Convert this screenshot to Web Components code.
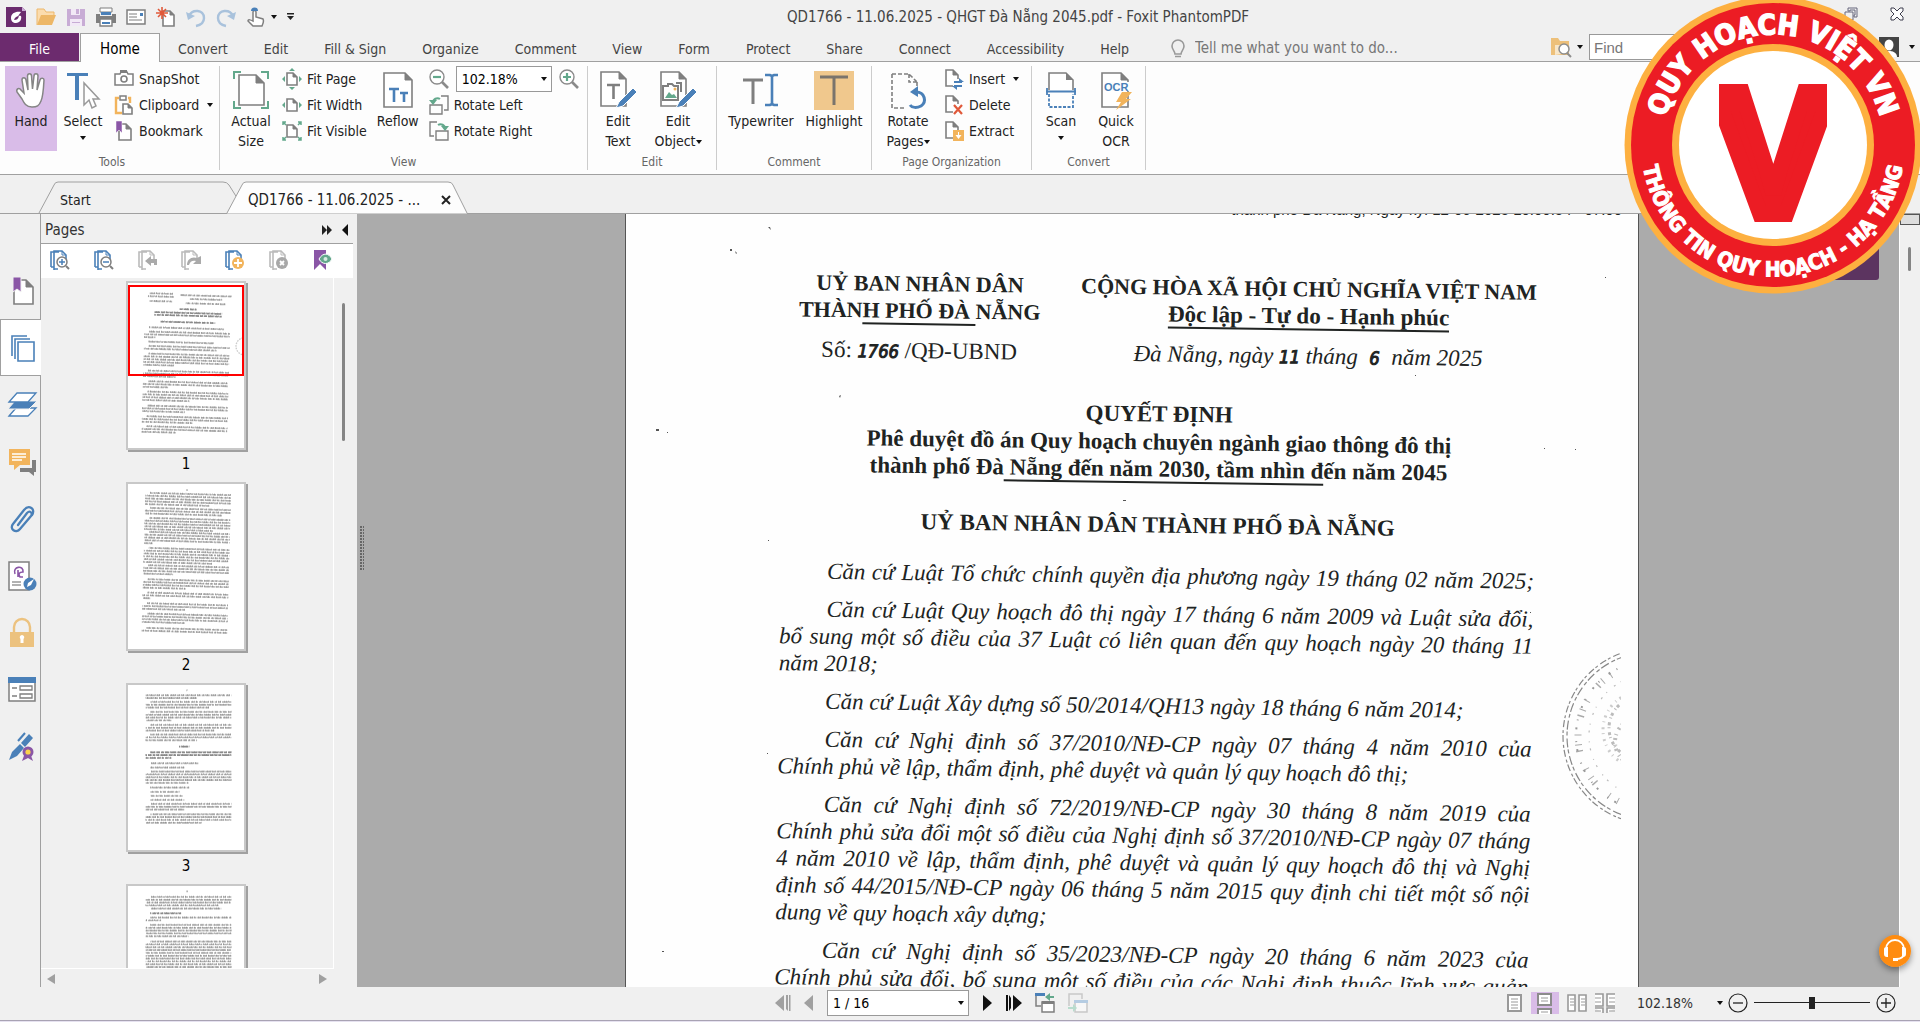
<!DOCTYPE html>
<html lang="vi">
<head>
<meta charset="utf-8">
<title>QD1766 - 11.06.2025 - QHGT Đà Nẵng 2045.pdf - Foxit PhantomPDF</title>
<style>
html,body{height:100%}
body{margin:0;background:#f0f0f0;color:#222;font-family:"DejaVu Sans Condensed","Noto Sans",sans-serif;font-size:14px;line-height:20px;overflow:hidden}
</style>
</head>
<body>
<pdf-app></pdf-app>
<script>
const G='#7f7f7f', B='#4a80b8', T='#63a88c', O='#f2b45c', P='#8a56a6';
const corner=(x,y,w,h,f)=>`<path d="M${x} ${y}h${w-f}l${f} ${f}v${h-f}h${-w}z" fill="#fff" stroke="${G}" stroke-width="1.6"/><path d="M${x+w-f} ${y}v${f}h${f}z" fill="${G}" stroke="${G}"/>`;
const caret='<path d="M0 0h6L3 4z" fill="#111"/>';
const ICONS={
 caret:[6,4,caret],
 cross:[10,10,'<path d="M1 1l8 8M9 1l-8 8" stroke="#222" stroke-width="2"/>'],
 app:[20,20,`<path d="M0 0h16l4 4v16H0z" fill="#6b2c6e"/><path d="M16 0v4h4z" fill="#c9a9d6"/><path d="M15 5c-5-1-10 1-10 6 0 3 2 5 5 5 4 0 6-4 5-7-3-1-6 1-6 4" fill="#fff"/><path d="M8 13c1-3 3-4 5-4-1 3-2 4-5 4z" fill="#6b2c6e"/>`],
 open:[20,20,`<path d="M1 18V2h7l2 3h8v4" fill="#fbdcae" stroke="#edb86c"/><path d="M1 18L5 8h15l-4 10z" fill="#edb767"/>`],
 save:[20,20,`<path d="M1 2h18v17H1z" fill="#c8acd5"/><path d="M5 2h9v6H5zM4 12h12v7H4z" fill="#f2e9f6"/><path d="M10 2h3v5h-3zM6 15h8v1H6z" fill="#c8acd5"/>`],
 print:[20,20,`<path d="M4 1h12v4H4z" fill="#fff" stroke="${G}"/><path d="M5 5h10v3H5z" fill="${B}"/><path d="M0 7h4v2h12V7h4v9H0z" fill="${G}"/><path d="M4 12h12v7H4z" fill="#fff" stroke="${G}" stroke-width="1.4"/><path d="M6 15h8v2H6z" fill="${B}"/>`],
 mail:[20,20,`<path d="M1 3h18v14H1z" fill="#fff" stroke="${G}" stroke-width="1.5"/><path d="M3 7h8M3 10h8M3 13h13" stroke="${G}"/><path d="M14 6h3v3h-3z" fill="${B}"/>`],
 create:[20,20,`${corner(7,4,11,15,4)}<path d="M6 0v12M0 6h12M2 2l8 8M10 2l-8 8" stroke="#e0593a" stroke-width="1.6"/>`],
 undo:[20,20,`<path d="M3 9c3-7 15-7 15 2 0 4-3 7-8 8" fill="none" stroke="#a9c2dc" stroke-width="2.4"/><path d="M0 5l2 8 7-4z" fill="#a9c2dc"/>`],
 redo:[20,20,`<path d="M17 9c-3-7-15-7-15 2 0 4 3 7 8 8" fill="none" stroke="#a9c2dc" stroke-width="2.4"/><path d="M20 5l-2 8-7-4z" fill="#a9c2dc"/>`],
 touch:[20,20,`<path d="M7 12V5a1.500 1.500 0 0 1 3 0v5l7 2c1 2 0 5-1 7H7L2 14c0-2 3-1 5 0z" fill="#fff" stroke="${G}" stroke-width="1.5"/><path d="M5 4a3.500 3.500 0 1 1 7 0" fill="${B}"/>`],
 custom:[8,8,`<path d="M0 0h7v1.500H0zM0 3h7L3.500 7z" fill="#222"/>`],
 bulb:[14,20,`<path d="M4 16c0-3-3-4-3-8a6 6 0 0 1 12 0c0 4-3 5-3 8zM4 18.500h6" fill="none" stroke="#999" stroke-width="1.6"/>`],
 hand:[32,38,`<path d="M9 22L7 9c0-3 3.500-3 4 0l2 10-.5-14c0-3 4-3 4 0l1 13L19 5c0-3 4-3 4 0l-1 14 3-10c.7-2.500 4-2 4 0-.5 9-1 17-3 21-2 5-4 6-9 6-6 0-8-4-10-8l-5-7c-1-3 2-5 4-2z" fill="#fff" stroke="#858585" stroke-width="1.5"/>`],
 select:[34,38,`<path d="M1 2h21v3H13v24h-4V5H1z" fill="${B}"/><path d="M18 12v22l5-5 3 8 4-2-3-7h6z" fill="#fff" stroke="#999" stroke-width="1.5"/>`],
 snapshot:[20,20,`<path d="M1 5h5l1-2h6l1 2h5v11H1z" fill="#fff" stroke="${G}" stroke-width="1.5"/><path d="M6 1h7v3H6z" fill="${G}"/><circle cx="10" cy="10" r="3" fill="none" stroke="${G}" stroke-width="1.6"/>`],
 clipboard:[20,20,`<path d="M5 3H2v15h6M14 3h2v5" fill="none" stroke="${O}" stroke-width="2.400"/><path d="M6 1h6v4H6z" fill="#fff" stroke="${G}" stroke-width="1.500"/>${corner(9,9,9,10,4)}`],
 bookmark:[20,20,`${corner(5,3,12,16,5)}<path d="M2 0h6v12l-3-3-3 3z" fill="${P}" stroke="#fff" stroke-width=".5"/>`],
 actual:[36,38,`<path d="M1 8V1h7M28 1h7v7M1 30v7h7M28 37h7v-7" fill="none" stroke="${T}" stroke-width="2"/>${corner(6,4,25,30,8)}`],
 fitpage:[20,20,`${corner(5,4,10,12,4)}<path d="M7 2l3-3 3 3zM7 18l3 3 3-3zM3 7l-3 3 3 3zM17 7l3 3-3 3z" fill="${T}"/>`],
 fitwidth:[20,20,`${corner(5,4,10,12,4)}<path d="M3 7l-3 3 3 3zM17 7l3 3-3 3z" fill="${T}"/>`],
 fitvisible:[20,20,`${corner(5,4,10,12,4)}<path d="M1 4V1h3M16 1h3v3M1 16v3h3M16 19h3v-3M1 1l3 3M19 1l-3 3M1 19l3-3M19 19l-3-3" fill="none" stroke="${T}" stroke-width="1.5"/>`],
 reflow:[30,38,`${corner(1,2,28,34,7)}<path d="M6 18h10M11 18v13M17 22h8M21 22v9" stroke="${B}" stroke-width="2.600"/>`],
 zoomout:[20,20,`<circle cx="8" cy="8" r="7" fill="#fff" stroke="#8a8a8a" stroke-width="1.400"/><path d="M13 13l6 6" stroke="#8a8a8a" stroke-width="2.6"/><path d="M4 8h8" stroke="${T}" stroke-width="2.200"/>`],
 zoomin:[20,20,`<circle cx="8" cy="8" r="7" fill="#fff" stroke="#8a8a8a" stroke-width="1.400"/><path d="M13 13l6 6" stroke="#8a8a8a" stroke-width="2.6"/><path d="M4 8h8M8 4v8" stroke="${T}" stroke-width="2.200"/>`],
 rotleft:[20,20,`<path d="M1 10h12v9H1zM12 1h7v14h-4" fill="none" stroke="${G}" stroke-width="1.400"/><path d="M4 8c0-4 4-6 7-4" fill="none" stroke="${T}" stroke-width="2"/><path d="M0 5l4 5 4-5z" fill="${T}"/>`],
 rotright:[20,20,`<path d="M7 10h12v9H7zM8 1H1v14h4" fill="none" stroke="${G}" stroke-width="1.400"/><path d="M16 8c0-4-4-6-7-4" fill="none" stroke="${T}" stroke-width="2"/><path d="M20 5l-4 5-4-5z" fill="${T}"/>`],
 edittext:[38,40,`${corner(2,2,25,34,7)}<path d="M8 15h13M14.500 15v14" stroke="${G}" stroke-width="2.600"/><path d="M17 38l3-6 14-14 4 4-14 14z" fill="${B}" stroke="#fff"/>`],
 editobj:[38,40,`${corner(2,2,25,34,7)}<path d="M9 16h-5v14h15V16h-4l-2-2h-4zM17 13h5v9" fill="#fff" stroke="${G}" stroke-width="2"/><path d="M6 28l4-6 3 3 2-1 3 4z" fill="${T}"/><circle cx="16" cy="19" r="1.500" fill="${O}"/><path d="M17 38l3-6 14-14 4 4-14 14z" fill="${B}" stroke="#fff"/>`],
 typewriter:[36,38,`<path d="M0 9h20M10 9v24" stroke="${G}" stroke-width="3"/><path d="M22 4h5l2 1 2-1h4M22 34h5l2-1 2 1h4M29 5v28" fill="none" stroke="${B}" stroke-width="2.600"/>`],
 highlight:[40,40,`<path d="M0 1h40v39H0z" fill="#f0c88d"/><path d="M6 7h28M20 7v28" stroke="#7a746c" stroke-width="3"/>`],
 rotate:[36,40,`<path d="M2 4h17l8 8M2 4v34h14M27 12v8M19 4v8h8" fill="none" stroke="${G}" stroke-width="1.600" stroke-dasharray="4 2"/><path d="M26 22c9 0 11 10 5 14-4 2-9 2-11-1" fill="none" stroke="${B}" stroke-width="3"/><path d="M20 22l8-6v11z" fill="${B}"/>`],
 insert:[20,20,`${corner(2,1,12,16,5)}<path d="M9 10h11v10H9z" fill="#fdfdfd"/><path d="M10 13h8M18 17h-8" stroke="${B}" stroke-width="1.800"/><path d="M15 9l5 4h-5zM13 21l-5-4h5z" fill="${B}"/>`],
 remove:[20,20,`${corner(2,1,12,16,5)}<path d="M9 9h11v11H9z" fill="#fdfdfd"/><path d="M10 10l8 9M18 10l-8 9" stroke="#e0593a" stroke-width="2.200"/>`],
 extract:[20,20,`${corner(2,1,12,16,5)}<path d="M9 9h11v11H9z" fill="${O}"/><path d="M14 11v3h-2.500l3 4 3-4H15v-3z" fill="#fff"/>`],
 scan:[30,38,`<path d="M3 19V2h17l7 7v10" fill="#fff" stroke="${G}" stroke-width="1.600"/><path d="M20 2v7h7z" fill="${G}"/><path d="M0 20.500h30M1 17v7M29 17v7" stroke="${B}" stroke-width="1.800"/><path d="M3 23v13h24V23" fill="none" stroke="${B}" stroke-width="1.800" stroke-dasharray="3 1.500"/>`],
 ocr:[32,40,`${corner(2,3,26,34,7)}<path d="M4 12h27v9H4z" fill="#fdfdfd"/><text x="4" y="21" font-family="Liberation Sans" font-weight="700" font-size="11" fill="${B}">OCR</text><path d="M22 22h10l-6 7h5L16 40l5-8h-5z" fill="${O}"/>`],
 findfolder:[20,20,`<path d="M0 18V1h7l2 3h9v14z" fill="#edc07a"/><path d="M4 18V8h13v8z" fill="#f8e6c8"/><circle cx="13" cy="12" r="5" fill="#fff" stroke="#8d8d8d" stroke-width="1.500"/><path d="M16 16l4 4" stroke="#8d8d8d" stroke-width="2"/>`],
 restore:[14,14,`<path d="M4 1h9v9h-3v-2h1V3H6v1H4zM1 5h8v8H1z" fill="none" stroke="#66667c"/>`],
 close:[14,14,`<path d="M1 1h3l3 3 3-3h3v3l-3 3 3 3v3h-3l-3-3-3 3H1v-3l3-3-3-3z" fill="#fff" stroke="#3d3d4d"/>`],
 avatar:[20,20,`<path d="M0 0h20v20H0z" fill="#444"/><ellipse cx="10" cy="8" rx="4.500" ry="5.500" fill="#fff"/><path d="M2 20c0-5 5-6 8-6s8 1 8 6z" fill="#fff"/>`],
 sbookmark:[26,28,`${corner(5,3,19,24,7)}<path d="M4 0h8v15l-4-3-4 3z" fill="${P}" stroke="#f0f0f0"/>`],
 spages:[26,28,`<path d="M2 22V2h15M5 25V5h15" fill="none" stroke="${B}" stroke-width="1.600"/><path d="M8 8h16v19H8z" fill="#fff" stroke="${B}" stroke-width="1.600"/>`],
 slayers:[30,28,`<path d="M2 25L9 17h20l-8 8z" fill="#fff" stroke="${B}" stroke-width="1.300"/><path d="M1 18L8 10h22l-8 8z" fill="${B}" stroke="#f0f0f0"/><path d="M2 11L10 2h19l-8 9z" fill="#fff" stroke="${B}" stroke-width="1.300"/>`],
 scomment:[28,28,`<path d="M17 12h11v12h-2v4l-5-4H12v-4h12v-8z" fill="${G}"/><path d="M1 1h21v16H12l-6 5v-5H1z" fill="${O}"/><path d="M4 6h14M4 9h14M4 12h10" stroke="#fff" stroke-width="1.500"/>`],
 sclip:[26,28,`<path d="M9 20L18 8c3-3 6 0 4 3L11 24c-4 5-11 0-7-5L15 5c5-6 12-1 8 5" fill="none" stroke="${B}" stroke-width="2.300" stroke-linecap="round"/>`],
 ssign:[30,30,`<path d="M2 1h20v28H2z" fill="#fff" stroke="${G}" stroke-width="1.500"/><path d="M8 13c-3-8 9-9 8-2-4 0-5 2-3 5h3M11 9v7" fill="none" stroke="${P}" stroke-width="1.600"/><path d="M5 21h9M5 24h9" stroke="#999" stroke-width="1.400"/><circle cx="23" cy="23" r="6.500" fill="${B}"/><path d="M20 26l1-4 6-4-3 6z" fill="#fff"/>`],
 slock:[26,30,`<path d="M5 14V9a8 8 0 0 1 16 0v5" fill="none" stroke="#ecc27f" stroke-width="2.400"/><path d="M1 14h24v15H1z" fill="#ecc27f"/><path d="M13 17a2.300 2.300 0 0 1 1.500 4v4h-3v-4a2.300 2.300 0 0 1 1.500-4z" fill="#fff"/>`],
 sform:[28,26,`<path d="M1 1h26v23H1z" fill="#fff" stroke="${G}" stroke-width="1.500"/><path d="M0 0h28v6H0z" fill="${B}"/><path d="M12 9h12v4H12zM12 17h12v4H12z" fill="#fff" stroke="${G}" stroke-width="1.300"/><path d="M4 11h5M4 19h5" stroke="${G}" stroke-width="1.500"/>`],
 sstamp:[28,30,`<path d="M1 28l3-8 8-8 4 4-7 8zM13 11l8-9 4 4-8 9z" fill="${B}"/><path d="M10 9l7-8" stroke="${B}" stroke-width="2"/><path d="M14 29l3-8h5l3 8-5-3z" fill="${P}"/><circle cx="20" cy="20" r="5.500" fill="${P}"/><circle cx="20" cy="20" r="2.600" fill="#fbd24b"/>`],
 headset:[32,32,`<circle cx="16" cy="16" r="16" fill="#ff8c10"/><path d="M7 14a9 9 0 0 1 18 0v4c0 4-3 6-8 6" fill="none" stroke="#fff" stroke-width="1.800"/><path d="M5 14q0-2 3-2h1v10H8q-3 0-3-3zM27 14q0-2-3-2h-1v10h1q3 0 3-3z" fill="#fff"/><path d="M14 23h5v3h-5z" fill="#fff"/>`],
 ffwd:[10,10,`<path d="M0 0l5 5-5 5zM5 0l5 5-5 5z" fill="#222"/>`],
 collapse:[6,12,`<path d="M6 0v12L0 6z" fill="#111"/>`],
 first:[16,18,`<path d="M9 1v16L0 9zM11 1h2v16l-2-2zM14 1h1.500v16H14z" fill="#a0a0a0"/>`],
 prev:[10,18,`<path d="M9 1v16L0 9z" fill="#a0a0a0"/>`],
 next:[10,18,`<path d="M1 1v16l9-8z" fill="#111"/>`],
 last:[17,18,`<path d="M8 1v16l9-8zM1 1h2v16H1zM4 1l2 3v10l-2 3z" fill="#111"/>`],
 back:[20,20,`<path d="M1 1h8M1 1v12h5" fill="none" stroke="${G}" stroke-width="1.500"/><path d="M0 0h10v3H0z" fill="${B}"/><path d="M7 9h12v10H7z" fill="#fff" stroke="${G}" stroke-width="1.500"/><path d="M7 8h12v3H7z" fill="${G}"/><path d="M10 4l5-4v3h4v2h-4v3z" fill="${T}"/>`],
 fwd:[20,20,`<path d="M1 13V1h13v5" fill="none" stroke="#c8c8c8" stroke-width="1.500"/><path d="M7 8h12v11H7z" fill="#f7f7f7" stroke="#c8c8c8" stroke-width="1.500"/><path d="M6 7h14v3H6z" fill="#b5cce2"/><path d="M9 15l-4-4v3H0v2h5v3z" fill="#b8dccd"/>`],
 vsingle:[16,18,`<path d="M1 1h13v16H1z" fill="#fff" stroke="#999" stroke-width="2"/><path d="M4 5h7M4 8h7M4 11h7M4 14h7" stroke="#999"/>`],
 vcont:[28,22,`<path d="M7 2h13v11H7zM7 22v-5h13v5" fill="#fff" stroke="#8c8c8c" stroke-width="2"/><path d="M10 6h7M10 9h7M10 20h7" stroke="#999"/>`],
 vfacing:[20,18,`<path d="M1 1h7v16H1zM12 1h7v16h-7z" fill="#fff" stroke="#999" stroke-width="1.600"/><path d="M3 5h4M3 8h4M3 11h4M14 5h4M14 8h4M14 11h4" stroke="#999"/>`],
 vcontfacing:[20,20,`<path d="M0 1h8v12H0M20 1h-8v12h8M0 15h8v5M20 15h-8v5" fill="#fff" stroke="#999" stroke-width="1.600"/><path d="M0 5h6M0 9h6M14 5h6M14 9h6M0 18h6M14 18h6" stroke="#999"/>`],
 minus:[20,20,`<circle cx="10" cy="10" r="9" fill="none" stroke="#222" stroke-width="1.200"/><path d="M5 10h10" stroke="#222" stroke-width="1.300"/>`],
 plus:[20,20,`<circle cx="10" cy="10" r="9" fill="none" stroke="#222" stroke-width="1.200"/><path d="M5 10h10M10 5v10" stroke="#222" stroke-width="1.300"/>`],
 al:[8,10,'<path d="M8 0v10L0 5z" fill="#a0a0a0"/>'], ar:[8,10,'<path d="M0 0v10l8-5z" fill="#a0a0a0"/>']
};
const sheets=c=>`<path d="M1 17V2h8M4 20V1h8l4 4v6" fill="none" stroke="${c}" stroke-width="1.600"/><path d="M12 1v4h4" fill="none" stroke="${c}"/><path d="M1 17h3M4 19h4" stroke="${c}" stroke-width="1.600"/>`;
const mag=s=>`<circle cx="12" cy="12" r="5" fill="#fff" stroke="${G}" stroke-width="1.500"/><path d="M16 16l3 3" stroke="${G}" stroke-width="2"/><path d="${s}" stroke="${B}" stroke-width="1.500"/>`;
ICONS.tin=[20,20,sheets(B)+mag('M9 12h6M12 9v6')];
ICONS.tout=[20,20,sheets(B)+mag('M9 12h6')];
ICONS.tundo=[20,20,sheets('#bbb')+'<path d="M7 11l6-5v3h6v6h-3v-2h-3v3z" fill="#aaa"/>'];
ICONS.tredo=[20,20,sheets('#bbb')+'<path d="M20 6v8h-8l3-3c-3-1-6 0-7 4H6c0-6 5-9 10-7z" fill="#aaa"/>'];
ICONS.tadd=[20,20,sheets(B)+`<circle cx="13" cy="13" r="6" fill="${O}"/><path d="M9 13h8M13 9v8" stroke="#fff" stroke-width="1.800"/>`];
ICONS.tdel=[20,20,sheets('#bbb')+'<circle cx="13" cy="13" r="6" fill="#a8a8a8"/><path d="M11 11l4 4M15 11l-4 4" stroke="#fff" stroke-width="1.800"/>'];
ICONS.tview=[20,20,`<path d="M1 0h12v20l-6-6-6 6z" fill="${P}"/><path d="M6 9c4-7 10-6 13 0-3 6-10 6-13 0z" fill="${T}" stroke="#fff"/><circle cx="12.500" cy="9" r="2" fill="#d7ebe2"/>`];

function define(name,css,html){
  const t=document.createElement('template');
  t.innerHTML=`<style>*{box-sizing:border-box}button{font:inherit;color:inherit;background:none;border:0;padding:0;margin:0}${css}</style>`+(typeof html==='string'?html:'');
  customElements.define(name,class extends HTMLElement{
    connectedCallback(){
      if(this.shadowRoot)return;
      const r=this.attachShadow({mode:'open'});
      r.append(t.content.cloneNode(true));
      if(typeof html==='function')r.innerHTML+=html(this);
    }
  });
}
define('ui-icon',':host{display:inline-flex;flex:none}svg{display:block;overflow:visible}',el=>{
  const [w,h,s]=ICONS[el.getAttribute('name')];
  return `<svg width="${w}" height="${h}" viewBox="0 0 ${w} ${h}" aria-hidden="true">${s}</svg>`;
});
define('icon-button',':host{display:inline-flex}button{display:flex;align-items:center;justify-content:center}',
  el=>`<button aria-label="${el.getAttribute('label')}"><ui-icon name="${el.getAttribute('icon')}"></ui-icon></button>`);
define('drop-list',`:host{display:inline-flex;position:relative;background:#fff;border:1px solid #999}
 select{appearance:none;border:0;background:none;font:inherit;color:#000;padding:0 20px 0 5px;width:100%;height:24px}
 ui-icon{position:absolute;right:4px;top:10px;pointer-events:none}`,
  el=>`<select aria-label="${el.getAttribute('label')}"><option>${el.getAttribute('value')}</option></select><ui-icon name="caret"></ui-icon>`);

define('title-bar',`:host{display:flex;align-items:center;height:33px;padding:0 16px 0 6px;color:#444}
 .quick{display:flex;gap:10px;align-items:center;flex:1 1 0}.quick .t{display:flex;align-items:center;gap:4px}
 .caret{margin-left:1px;display:flex;gap:10px;align-items:center}
 h1{font:inherit;font-size:15px;margin:0;white-space:nowrap;padding-left:126px}
 .win{display:flex;gap:32px;justify-content:flex-end;flex:1 1 0;padding-bottom:6px}`,
 `<nav class="quick"><ui-icon name="app"></ui-icon>
 <icon-button label="Open" icon="open"></icon-button><icon-button label="Save" icon="save"></icon-button><icon-button label="Print" icon="print"></icon-button><icon-button label="Email" icon="mail"></icon-button><icon-button label="New" icon="create"></icon-button><icon-button label="Undo" icon="undo"></icon-button><icon-button label="Redo" icon="redo"></icon-button><span class="t"><icon-button label="Touch mode" icon="touch"></icon-button><span class="caret"><ui-icon name="caret"></ui-icon><icon-button label="Customize" icon="custom"></icon-button></span></span></nav>
 <h1>QD1766 - 11.06.2025 - QHGT Đà Nẵng 2045.pdf - Foxit PhantomPDF</h1>
 <div class="win"><icon-button label="Restore" icon="restore"></icon-button><icon-button label="Close" icon="close"></icon-button></div>`);

define('menu-bar',`:host{display:flex;height:29px;color:#444;border-bottom:1px solid #a0a0a0;align-items:stretch}
 button{padding:3px 18px 0;height:28px}
 .file{background:#6c2b6e;color:#fff;width:79px;padding:3px 0 0;margin-right:1px}
 .home{background:#fdfdfd;color:#000;border:1px solid #a0a0a0;border-bottom:0;height:29px;width:80px;padding:2px 0 0;font-size:15px}
 .tell{display:flex;align-items:center;gap:10px;margin-left:24px;color:#777;font-size:15px;padding-top:2px}
 input{font:inherit;color:#777;border:0;background:none;padding:0;outline:0}
 .tell input{width:220px}.tell input::placeholder,.find::placeholder{color:#777;opacity:1}
 .right{margin-left:auto;display:flex;align-items:center;gap:6px;padding-right:5px;height:28px}
 .find{background:#fff;border:1px solid #999;height:26px;width:240px;padding:0 4px;color:#666;font-family:"Liberation Sans",sans-serif;font-size:15px}
 .user{display:flex;align-items:center;gap:10px;margin-left:44px}`,
 `<button class="file">File</button><button class="home">Home</button>
 ${['Convert','Edit','Fill &amp; Sign','Organize','Comment','View','Form','Protect','Share','Connect','Accessibility','Help'].map(x=>`<button>${x}</button>`).join('')}
 <label class="tell"><ui-icon name="bulb"></ui-icon><input aria-label="Tell me" placeholder="Tell me what you want to do..."></label>
 <div class="right"><ui-icon name="findfolder"></ui-icon><ui-icon name="caret"></ui-icon><input class="find" aria-label="Find" placeholder="Find"><span class="user"><ui-icon name="avatar"></ui-icon><ui-icon name="caret"></ui-icon></span></div>`);

define('big-tool',`:host{display:flex;width:52px}
 button{width:100%;height:85px;display:flex;flex-direction:column;align-items:center;padding-top:3px}
 :host([active]) button{background:#d9bce8}
 .i{height:42px;display:flex;align-items:center}
 .l{text-align:center;white-space:nowrap}
 .down{height:14px;margin-top:5px}`,
 el=>`<button><span class="i"><ui-icon name="${el.getAttribute('icon')}"></ui-icon></span><span class="l"><slot></slot></span>${el.hasAttribute('down')?'<ui-icon class="down" name="caret"></ui-icon>':''}</button>`);
define('small-tool',`:host{display:block}button{display:flex;align-items:center;height:26px;gap:5px;white-space:nowrap}.c{margin-left:3px}`,
 el=>`<button><ui-icon name="${el.getAttribute('icon')}"></ui-icon><slot></slot>${el.hasAttribute('menu')?'<ui-icon class="c" name="caret"></ui-icon>':''}</button>`);
define('ribbon-group',`:host{display:flex;flex-direction:column;border-right:1px solid #ccc;height:104px;margin-top:4px;flex:none}
 .row{display:flex;align-items:flex-start;height:86px}.n{text-align:center;font-size:12px;line-height:16px;color:#666;padding-top:2px}`,
 el=>`<div class="row"><slot></slot></div><div class="n">${el.getAttribute('label')}</div>`);
define('ribbon-bar',`:host{display:flex;height:113px;background:#fdfdfd;border-bottom:1px solid #a0a0a0}
 .col{display:flex;flex-direction:column}.zoom{display:flex;align-items:center;height:26px;gap:7px}
 .g1{width:220px;padding-left:5px}.g2{width:368px}.g3{width:129px}.g4{width:155px}.g5{width:160px}.g6{width:114px}
 drop-list{width:96px}.sp{padding-left:5px}.w60{width:60px}.w62{width:62px}.w58{width:58px}.w72{width:72px}.w88{width:88px}
 .dn{vertical-align:middle}`,
 `<ribbon-group class="g1" label="Tools"><big-tool icon="hand" active>Hand</big-tool><big-tool icon="select" down>Select</big-tool>
 <div class="col sp"><small-tool icon="snapshot">SnapShot</small-tool><small-tool icon="clipboard" menu>Clipboard</small-tool><small-tool icon="bookmark">Bookmark</small-tool></div></ribbon-group>
 <ribbon-group class="g2" label="View"><big-tool class="w62" icon="actual">Actual<br>Size</big-tool>
 <div class="col"><small-tool icon="fitpage">Fit Page</small-tool><small-tool icon="fitwidth">Fit Width</small-tool><small-tool icon="fitvisible">Fit Visible</small-tool></div>
 <big-tool class="w62" icon="reflow">Reflow</big-tool>
 <div class="col"><div class="zoom"><icon-button label="Zoom out" icon="zoomout"></icon-button><drop-list label="Zoom" value="102.18%"></drop-list><icon-button label="Zoom in" icon="zoomin"></icon-button></div><small-tool icon="rotleft">Rotate Left</small-tool><small-tool icon="rotright">Rotate Right</small-tool></div></ribbon-group>
 <ribbon-group class="g3" label="Edit"><big-tool class="w60" icon="edittext">Edit<br>Text</big-tool><big-tool class="w60" icon="editobj">Edit<br>Object<ui-icon class="dn" name="caret"></ui-icon></big-tool></ribbon-group>
 <ribbon-group class="g4" label="Comment"><big-tool class="w88" icon="typewriter">Typewriter</big-tool><big-tool class="w58" icon="highlight">Highlight</big-tool></ribbon-group>
 <ribbon-group class="g5" label="Page Organization"><big-tool class="w72" icon="rotate">Rotate<br>Pages<ui-icon class="dn" name="caret"></ui-icon></big-tool>
 <div class="col"><small-tool icon="insert" menu>Insert</small-tool><small-tool icon="remove">Delete</small-tool><small-tool icon="extract">Extract</small-tool></div></ribbon-group>
 <ribbon-group class="g6" label="Convert"><big-tool class="w58" icon="scan" down>Scan</big-tool><big-tool icon="ocr">Quick<br>OCR</big-tool></ribbon-group>`);

define('doc-tabs',`:host{display:flex;height:39px;padding:7px 0 0 39px;border-bottom:1px solid #a0a0a0}
 .tab{position:relative;display:flex;align-items:center;width:200px;height:32px;padding:3px 16px 0 21px;white-space:nowrap;margin-right:-12px;text-align:left}
 .tab svg{position:absolute;left:0;top:0;width:100%;height:32px;overflow:visible}.tab span,.tab ui-icon{position:relative}
 .on{width:240px;z-index:1;font-size:15px}.on ui-icon{margin-left:auto}`,
 `<button class="tab"><svg viewBox="0 0 200 32"><path d="M0 31L15 3q1-3 4-3H184q4 0 6 3l10 16" fill="none" stroke="#a0a0a0"/></svg><span>Start</span></button>
 <button class="tab on"><svg viewBox="0 0 240 32"><path d="M0 31.500L15 3q1-3 4-3H221q4 0 5 3l14 28.500z" fill="#fdfdfd"/><path d="M0 31L15 3q1-3 4-3H221q4 0 5 3l14 28" fill="none" stroke="#a0a0a0"/></svg><span>QD1766 - 11.06.2025 - ...</span><ui-icon name="cross"></ui-icon></button>`);

define('side-rail',`:host{display:flex;flex-direction:column;width:41px;flex:none;padding-top:48px;border-right:1px solid #a0a0a0}
 button{height:57px;display:flex;align-items:center;justify-content:center;width:40px;padding-left:4px}
 .on{background:#fff;border:1px solid #a0a0a0;border-right:0;width:41px}`,
 ['sbookmark','spages','slayers','scomment','sclip','ssign','slock','sform','sstamp'].map((n,i)=>`<button aria-label="${['Bookmarks','Pages','Layers','Comments','Attachments','Signatures','Security','Fields','Sign'][i]}" class="${i==1?'on':''}"><ui-icon name="${n}"></ui-icon></button>`).join(''));

/* Paragraph rows of each preview: [top, rows, last row share, indent, weight] */
const THUMBS={
 1:[[136,1,.93,14],[149,3,.13,14],[179,1,.8,12],[192,2,.85,14],[215,5,.36,14],[266,3,.38,14],[298,3,.3,14],[329,4,.55,14],[371,3,.5,14],[403,3,.6,14],[433,3,.4,14]],
 2:[[30,5,.75,14],[75,3,.9,14],[105,5,.8,14],[147,5,.1,14],[195,6,.8,14],[247,4,.35,14],[289,4,.5,14],[329,3,.1,14],[361,3,.5,14],[392,4,.5,14],[435,2,1,14]],
 3:[[31,2,.6,0],[51,3,.75,14],[81,4,.3,14],[120,3,.8,14],[149,3,.6,14],[185,1,.2,100,1],[202,3,.3,14,1],[235,1,.6,14],[248,1,.42,14],[260,5,.5,14],[308,1,.48,14],[321,1,.36,14],[333,1,.4,14],[345,1,.42,14],[357,3,.45,14],[388,4,.65,14]],
 4:[[33,4,.85,14],[68,1,.88,14],[82,1,.38,14,1],[95,2,.18,14],[117,5,.5,14],[167,12,1,14]]
};
define('page-thumb',`:host{display:flex;flex-direction:column;align-items:center;height:201px;flex:none;color:#000}
 .f{position:relative;width:120px;height:169px;border:2px solid #c8c8c8;background:#fff;box-shadow:2px 2px 0 #a0a0a0}
 .f svg{display:block}.v{position:absolute;left:0;top:2px;width:116px;height:91px;border:2px solid #f00}
 .n{padding-top:4px;font-size:15px}`,el=>{
  const n=+el.getAttribute('page'); let s='',k=n*7;
  const seg=(x1,x2,y,d)=>{k+=11; s+=`<path d="M${x1} ${y}H${x2}" stroke="${d?'#8c8c8c':'#b4b4b4'}" stroke-width="5" stroke-dasharray="${9+k%5} 3 ${16+k%7} 3 11 3 ${6+k%4} 3" stroke-dashoffset="${k%40}"/><path d="M${x1} ${y-1}H${x2}" stroke="#858585" stroke-width="5" stroke-dasharray="1.500 6 1.500 4 2 9" stroke-dashoffset="${k%23}"/>`;};
  if(n==1)[[66,135,34],[61,140,43],[66,134,57],[157,312,37],[187,284,48],[174,294,61],[157,209,79,1],[82,285,90,1],[82,284,98,1],[100,265,118,1]].forEach(a=>seg(...a));
  else seg(175,180,n==2?18:16);
  THUMBS[n].forEach(([y,r,l,ind,d])=>{for(let i=0;i<r;i++){const a=53+(i?0:ind); seg(a,i==r-1?a+(310-a)*l:310,y+i*8.500,d);}});
  const tilt=n<3?1.6:0;
  return `<div class="f"><svg width="116" height="165" viewBox="0 0 348 495" role="img"><g transform="rotate(${tilt} 174 0)">${s}</g>${n==1?'<circle cx="350" cy="190" r="26" fill="none" stroke="#ccc" stroke-width="4" stroke-dasharray="5 3"/>':''}</svg>${n==1?'<div class="v"></div>':''}</div>${n<4?`<div class="n">${n}</div>`:''}`;
});
define('pages-panel',`:host{display:flex;flex-direction:column;width:316px;flex:none}
 header{display:flex;align-items:center;height:29px;padding:2px 9px 0 4px;color:#333;gap:10px;flex:none}header span{flex:1;font-size:15px}
 .bar{display:flex;align-items:center;justify-content:space-between;background:#fff;border-top:1px solid #a0a0a0;height:35px;padding:0 20px 2px 9px;width:312px;flex:none}
 .list{flex:1;min-height:0;display:flex;width:312px}
 .thumbs{width:293px;border-right:1px solid #fff;border-bottom:1px solid #fff;overflow:hidden;padding:3px 2px 0 0}
 .sb{flex:1;padding:25px 8px 0}.sb i{display:block;height:138px;width:3px;border-radius:2px;background:#858585}
 .h{display:flex;justify-content:space-between;height:18px;align-items:center;padding:2px 30px 0 6px;flex:none}`,
 `<header><span>Pages</span><icon-button label="Expand" icon="ffwd"></icon-button><icon-button label="Collapse" icon="collapse"></icon-button></header>
 <div class="bar">${[['tin','Enlarge'],['tout','Reduce'],['tundo','Rotate left'],['tredo','Rotate right'],['tadd','Insert'],['tdel','Delete'],['tview','View']].map(a=>`<icon-button icon="${a[0]}" label="${a[1]}"></icon-button>`).join('')}</div>
 <div class="list"><div class="thumbs"><page-thumb page="1"></page-thumb><page-thumb page="2"></page-thumb><page-thumb page="3"></page-thumb><page-thumb page="4"></page-thumb></div><div class="sb"><i></i></div></div>
 <div class="h"><ui-icon name="al"></ui-icon><ui-icon name="ar"></ui-icon></div>`);

define('pdf-page',`:host{display:block;position:relative;width:1014px;height:100%;overflow:hidden;background:#fefefe;border:1px solid #555;border-width:0 1px;box-sizing:border-box;color:#202322;font:23px/27px "Liberation Serif","Times New Roman",serif}
 .sheet{padding:52px 99px 0 159px;transform:rotate(.8deg);transform-origin:0 0}
 .head{display:flex;gap:24px;text-align:center;white-space:nowrap}
 .l{flex:0 0 272px}.r{flex:0 0 458px}.c{font-size:22px;font-weight:700}
 .head div div+div+div{margin-top:13px}.hw{font-family:"DejaVu Sans Condensed",sans-serif;font-style:italic;font-size:18px;font-weight:400;-webkit-text-stroke:1px}
 u{text-underline-offset:5px;text-decoration-thickness:2px}
 h2,h3{font-size:inherit;font-weight:700;margin:0;text-align:center;white-space:nowrap}
 h2{margin-top:32px;margin-bottom:1px}.mid{margin:29px 0 24px}
 p{margin:0 0 11px;font-style:italic;white-space:nowrap}p span{display:block;text-align-last:justify}p span:first-child{padding-left:47px}p span:last-child{text-align-last:left}p .full:last-child{text-align-last:justify}
 .stamp,.spots,.sig{position:absolute}.stamp{left:935px;top:436px}.spots{left:0;top:0}
 .sig{right:16px;top:0;height:4px;overflow:hidden;font:15px/16px "Liberation Sans",sans-serif}.sig span{display:block;margin-top:-12px;white-space:nowrap}`,
 `<div class="sheet"><div class="head"><div class="l"><div class="c">UỶ BAN NHÂN DÂN</div><div class="c">THÀN<u>H PHỐ ĐÀ </u>NẴNG</div><div>Số: <span class="hw">1766</span> /QĐ-UBND</div></div>
 <div class="r"><div class="c">CỘNG HÒA XÃ HỘI CHỦ NGHĨA VIỆT NAM</div><div><b><u>Độc lập - Tự do - Hạnh phúc</u></b></div><div><i>Đà Nẵng, ngày <span class="hw">11</span> tháng&nbsp; <span class="hw">6</span>&nbsp; năm 2025</i></div></div></div>
 <h2>QUYẾT ĐỊNH</h2><h3>Phê duyệt đồ án Quy hoạch chuyên ngành giao thông đô thị</h3><h3>thành phố Đà<u> Nẵng đến năm 2030, tầm nhìn đ</u>ến năm 2045</h3>
 <h3 class="mid">UỶ BAN NHÂN DÂN THÀNH PHỐ ĐÀ NẴNG</h3>
 <p><span class="full">Căn cứ Luật Tổ chức chính quyền địa phương ngày 19 tháng 02 năm 2025;</span></p>
 <p><span>Căn cứ Luật Quy hoạch đô thị ngày 17 tháng 6 năm 2009 và Luật sửa đổi,</span><span>bổ sung một số điều của 37 Luật có liên quan đến quy hoạch ngày 20 tháng 11</span><span>năm 2018;</span></p>
 <p><span>Căn cứ Luật Xây dựng số 50/2014/QH13 ngày 18 tháng 6 năm 2014;</span></p>
 <p><span>Căn cứ Nghị định số 37/2010/NĐ-CP ngày 07 tháng 4 năm 2010 của</span><span>Chính phủ về lập, thẩm định, phê duyệt và quản lý quy hoạch đô thị;</span></p>
 <p><span>Căn cứ Nghị định số 72/2019/NĐ-CP ngày 30 tháng 8 năm 2019 của</span><span>Chính phủ sửa đổi một số điều của Nghị định số 37/2010/NĐ-CP ngày 07 tháng</span><span>4 năm 2010 về lập, thẩm định, phê duyệt và quản lý quy hoạch đô thị và Nghị</span><span>định số 44/2015/NĐ-CP ngày 06 tháng 5 năm 2015 quy định chi tiết một số nội</span><span>dung về quy hoạch xây dựng;</span></p>
 <p><span>Căn cứ Nghị định số 35/2023/NĐ-CP ngày 20 tháng 6 năm 2023 của</span><span class="full">Chính phủ sửa đổi, bổ sung một số điều của các Nghị định thuộc lĩnh vực quản</span></p></div>
 <div class="sig"><span>thành phố Đà Nẵng, Ngày ký: 12-06-2025 10:00:54 +07:00</span></div>
 <svg class="stamp" width="60" height="172" viewBox="0 0 60 172" fill="none" stroke="#888"><g stroke-width="1.200"><circle cx="90" cy="86" r="88" stroke-dasharray="7 2 3 3"/><circle cx="90" cy="86" r="84" stroke-dasharray="9 3 4 2"/><circle cx="90" cy="86" r="62" stroke="#bbb" stroke-dasharray="2 6 1 9"/></g><circle cx="90" cy="86" r="73" stroke="#aaa" stroke-width="7" stroke-dasharray="1.500 5 1 9 1 18"/><circle cx="90" cy="86" r="75" stroke="#999" stroke-width="2" stroke-dasharray="2 7 1 12"/><circle cx="80" cy="80" r="38" stroke="#ccc" stroke-width="3" stroke-dasharray="2 5 1 4"/><circle cx="79" cy="78" r="31" stroke="#bbb" stroke-width="3" stroke-dasharray="3 4 1 2"/><circle cx="78" cy="92" r="24" stroke="#bbb" stroke-width="4" stroke-dasharray="2 3 1 5"/></svg>
 <svg class="spots" width="1010" height="770" fill="#555"><path d="M142 13l2 0 1 3zM104 35h2v2h-2zM109 37l2 2-1 1zM213 182l2-1-1 3zM30 215h3v2h-3zM41 218h1v1h-1zM918 234h1v1h-1zM949 235h1v1h-1zM497 286h3v1h-3zM141 539h1v1h-1zM36 737h2v1h-2zM979 63h1v1h-1zM142 326h1v1h-1zM789 161h1v1h-1zM904 398h1v1h-1z"/></svg>`);

define('doc-view',`:host{display:flex;flex:1;min-width:0;position:relative}
 .canvas{flex:1;background:#ababab;display:flex;justify-content:center;padding-left:8px;border-right:1px solid #fff;position:relative;min-width:0}
 .grip{position:absolute;left:3px;top:312px;width:4px;height:44px;background:radial-gradient(circle at 1px 1px,#666 1px,transparent 1px) 0 0/3px 3px}
 .sb{width:20px;flex:none}.sb div{height:11px;border:1px solid #555;background:#ddd}.sb i{display:block;margin:22px 0 0 8px;width:3px;height:24px;border-radius:2px;background:#858585}
 .pop{position:absolute;right:20px;top:18px;width:120px;height:48px;background:#5c3460;border-radius:3px}`,
 `<div class="canvas"><div class="grip"></div><pdf-page></pdf-page><div class="pop"></div></div><div class="sb"><div></div><i></i></div>`);

define('status-bar',`:host{display:flex;align-items:center;height:34px;border-bottom:1px solid #a9a3b4;padding:0 24px 2px 775px;color:#333;box-sizing:border-box}
 .nav{display:flex;align-items:center;gap:13px;flex:1}drop-list{width:142px;background:#fff}
 .view{display:flex;align-items:center;gap:8px}.view icon-button:nth-child(2){background:#d9bce8}
 .pct{padding:0 24px 0 22px}.z{display:flex;align-items:center}
 .z>ui-icon{margin-right:5px}
 input{appearance:none;width:116px;margin:0 6px;height:20px;background:linear-gradient(#222,#222) center/100% 1px no-repeat}
 input::-webkit-slider-thumb{appearance:none;width:6px;height:12px;background:#222}`,
 `<div class="nav"><icon-button icon="first" label="First"></icon-button><icon-button icon="prev" label="Previous"></icon-button><drop-list label="Page" value="1 / 16"></drop-list><icon-button icon="next" label="Next"></icon-button><icon-button icon="last" label="Last"></icon-button><icon-button icon="back" label="Previous view"></icon-button><icon-button icon="fwd" label="Next view"></icon-button></div>
 <div class="view"><icon-button icon="vsingle" label="Single page"></icon-button><icon-button icon="vcont" label="Continuous"></icon-button><icon-button icon="vfacing" label="Facing"></icon-button><icon-button icon="vcontfacing" label="Continuous facing"></icon-button></div>
 <span class="pct">102.18%</span><div class="z"><ui-icon name="caret"></ui-icon><icon-button icon="minus" label="Zoom out"></icon-button><input type="range" aria-label="Zoom" value="50"><icon-button icon="plus" label="Zoom in"></icon-button></div>`);

define('brand-badge',`:host{display:block;width:298px;height:298px}svg{display:block;overflow:visible}text{font-family:"DejaVu Sans Condensed",sans-serif;font-weight:700;fill:#fff}.v{font-family:"Liberation Sans",sans-serif;fill:#ec1c24}`,
 `<svg width="298" height="298" viewBox="-149 -149 298 298"><circle r="148.500" fill="#fdb040"/><circle r="142" fill="#ec1c24"/><circle r="101" fill="#fdb040"/><circle r="94" fill="#fff"/>
 <defs><path id="up" d="M-109 20A110.800 110.800 0 1 1 109 20"/><path id="dn" d="M-129 -26A131.600 131.600 0 1 0 129 -26"/><clipPath id="vc"><path d="M-54 -61H54V77H-54z"/></clipPath></defs>
 <text font-size="28" text-anchor="middle" stroke="#fff" stroke-width="1.500"><textPath href="#up" startOffset="50%">QUY HOẠCH VIỆT VN</textPath></text>
 <text font-size="21" text-anchor="middle" stroke="#fff"><textPath href="#dn" startOffset="50%">THÔNG TIN QUY HOẠCH - HẠ TẦNG</textPath></text>
 <g clip-path="url(#vc)"><text class="v" x="0" y="69" font-size="178" text-anchor="middle" stroke="#ec1c24" stroke-width="16">V</text></g><path d="M-54 -61h24v27h-24zM30 -61h24v27H30z" fill="#ec1c24"/></svg>`);

define('pdf-app',`:host{display:flex;flex-direction:column;height:100vh;position:relative;overflow:hidden}
 .work{display:flex;flex:1;min-height:0}.foot{height:1px;flex:none;background:#e6e2f0}
 title-bar,menu-bar,ribbon-bar,doc-tabs,status-bar{flex:none}
 brand-badge{position:absolute;right:-2px;top:-4px}.help{position:absolute;right:9px;bottom:55px;border-radius:50%;box-shadow:0 3px 6px #0006}`,
 `<title-bar></title-bar><menu-bar></menu-bar><ribbon-bar></ribbon-bar><doc-tabs></doc-tabs><div class="work"><side-rail></side-rail><pages-panel></pages-panel><doc-view></doc-view></div><status-bar></status-bar><div class="foot"></div>
 <icon-button class="help" icon="headset" label="Support"></icon-button><brand-badge></brand-badge>`);
</script>
</body>
</html>
